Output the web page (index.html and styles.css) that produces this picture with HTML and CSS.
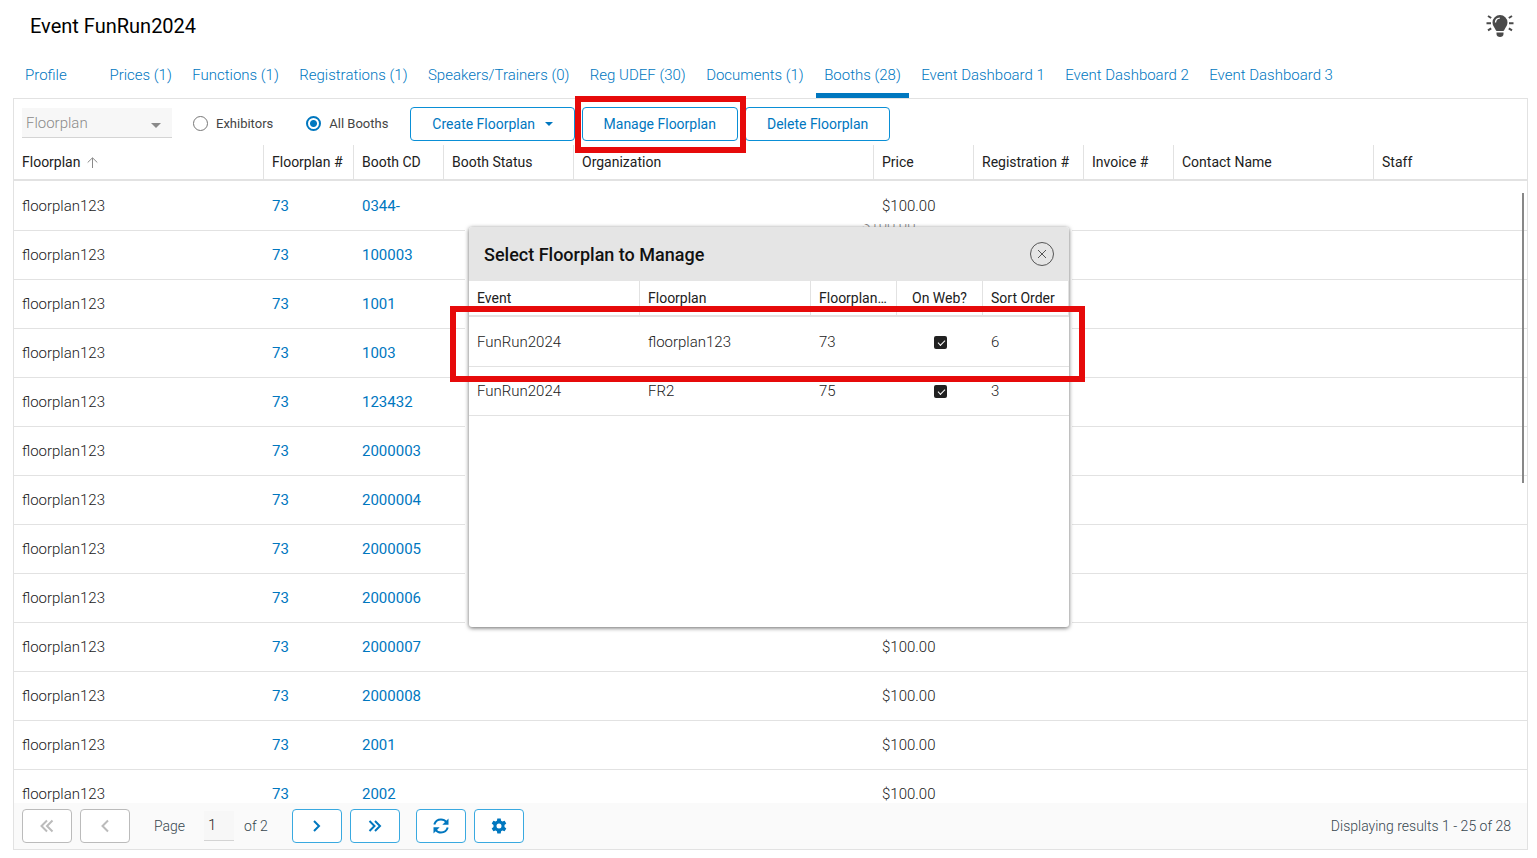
FILE: index.html
```html
<!DOCTYPE html>
<html lang="en">
<head>
  <meta charset="UTF-8" />
  <meta name="viewport" content="width=device-width, initial-scale=1.0"/>
  <title>Event FunRun2024</title>
  <link rel="stylesheet" href="styles.css">
</head>
<body>

  <header>
    <h1>Event FunRun2024</h1>
    <button class="tips" aria-label="Tips">
      <svg width="28" height="24" viewBox="0 0 28 24">
        <path d="M14 1a7.500 7.500 0 0 0-7.500 7.500c0 3.500 2.200 4.800 3.200 7.500.2.700.7 1 1.300 1h6c.6 0 1.100-.3 1.300-1 1-2.700 3.200-4 3.200-7.500A7.500 7.500 0 0 0 14 1z" fill="#4a4a4a"/>
        <path d="M10.500 18.500h7v1.500c0 2-1.500 3-3.500 3s-3.500-1-3.500-3z" fill="#4a4a4a"/>
        <path d="M9.500 8.500a4.500 4.500 0 0 1 4.300-4.300" fill="none" stroke="#fff" stroke-width="1.300"/>
        <path d="M.5 9.200H5M23 9.200h4.500M2 2l3.200 2M26 2l-3.200 2M2 16.400l3.200-2M26 16.400l-3.200-2" stroke="#4a4a4a" stroke-width="2"/>
      </svg>
    </button>
  </header>

  <nav>
    <a href="#profile" class="first">Profile</a>
    <a href="#prices">Prices (1)</a>
    <a href="#functions">Functions (1)</a>
    <a href="#registrations">Registrations (1)</a>
    <a href="#speakers">Speakers/Trainers (0)</a>
    <a href="#udef">Reg UDEF (30)</a>
    <a href="#documents">Documents (1)</a>
    <a href="#booths" class="active">Booths (28)</a>
    <a href="#dashboard1">Event Dashboard 1</a>
    <a href="#dashboard2">Event Dashboard 2</a>
    <a href="#dashboard3">Event Dashboard 3</a>
  </nav>

  <main>
    <div class="toolbar">
      <div class="select-wrap">
        <select aria-label="Floorplan">
          <option>Floorplan</option>
        </select>
      </div>
      <label class="radio exhibitors"><input type="radio" name="show"> Exhibitors</label>
      <label class="radio"><input type="radio" name="show" checked> All Booths</label>
      <div class="actions">
        <button class="btn create">Create Floorplan <span class="caret"></span></button>
        <div class="marked">
          <button class="btn">Manage Floorplan</button>
        </div>
        <button class="btn">Delete Floorplan</button>
      </div>
    </div>

    <div class="grid">
      <table class="booths">
        <colgroup>
          <col class="w250"><col class="w90"><col class="w90"><col class="w130"><col class="w300">
          <col class="w100"><col class="w110"><col class="w90"><col class="w200"><col>
        </colgroup>
        <thead>
          <tr>
            <th>Floorplan
              <svg class="sort" width="11" height="11" viewBox="0 0 11 11"><path d="M5.500 11V1M.7 5.500l4.800-4.700 4.800 4.700" fill="none" stroke="#8a8a8a"/></svg>
            </th>
            <th>Floorplan #</th>
            <th>Booth CD</th>
            <th>Booth Status</th>
            <th>Organization</th>
            <th>Price</th>
            <th>Registration #</th>
            <th>Invoice #</th>
            <th>Contact Name</th>
            <th>Staff</th>
          </tr>
        </thead>
        <tbody id="rows"></tbody>
      </table>
      <div class="scrollbar"></div>
    </div>

    <footer>
      <button class="btn page" disabled aria-label="First page">
        <svg width="14" height="14" viewBox="0 0 14 14"><path d="M7 1.500L1.500 7 7 12.500M12.500 1.500L7 7l5.500 5.500"/></svg>
      </button>
      <button class="btn page" disabled aria-label="Previous page">
        <svg width="14" height="14" viewBox="0 0 14 14"><path d="M10 1.500L4.500 7l5.500 5.500"/></svg>
      </button>
      <label for="page">Page</label>
      <input type="text" id="page" value="1">
      <span class="total">of 2</span>
      <button class="btn page" aria-label="Next page">
        <svg width="14" height="14" viewBox="0 0 14 14"><path d="M4 2l5 5-5 5"/></svg>
      </button>
      <button class="btn page" aria-label="Last page">
        <svg width="14" height="14" viewBox="0 0 14 14"><path d="M1.500 2l5 5-5 5M7 2l5 5-5 5"/></svg>
      </button>
      <button class="btn page refresh" aria-label="Refresh">
        <svg width="16" height="16" viewBox="0 0 16 16"><path d="M1.300 6.500C2.200 3.500 4.800 1.500 8 1.500c2.300 0 4.200 1 5.500 2.700M14.700 9.500c-.9 3-3.500 5-6.700 5-2.300 0-4.200-1-5.500-2.700"/><path class="solid" d="M15.500.5v6.200H9.300zM.5 15.500V9.300h6.200z"/></svg>
      </button>
      <button class="btn page" aria-label="Settings">
        <svg width="16" height="16" viewBox="0 0 16 16"><path class="solid" fill-rule="evenodd" d="M6.300.5h3.400l.4 2.200 1.300.8 2.200-.8 1.700 2.900-1.800 1.500v1.800l1.800 1.500-1.700 2.900-2.200-.8-1.300.8-.4 2.200H6.300l-.4-2.200-1.300-.8-2.200.8-1.700-2.900 1.800-1.500V7.100L.7 5.600l1.700-2.900 2.200.8 1.300-.8zM8 5.500a2.500 2.500 0 1 0 0 5 2.500 2.500 0 0 0 0-5z"/></svg>
      </button>
      <span class="results">Displaying results 1 - 25 of 28</span>
    </footer>
  </main>

  <div class="overlay">
    <span class="ghost" aria-hidden="true">$100.00</span>
    <section class="dialog" role="dialog" aria-labelledby="dialog-title">
      <div class="dialog-head">
        <h2 id="dialog-title">Select Floorplan to Manage</h2>
        <button class="close" aria-label="Close">
          <svg width="24" height="24" viewBox="0 0 24 24"><circle cx="12" cy="12" r="11.500"/><path d="M8 8l8 8M16 8l-8 8"/></svg>
        </button>
      </div>
      <table class="floorplans">
        <colgroup>
          <col class="w171"><col class="w171"><col class="w86"><col class="w86"><col>
        </colgroup>
        <thead>
          <tr><th>Event</th><th>Floorplan</th><th>Floorplan...</th><th class="center">On Web?</th><th>Sort Order</th></tr>
        </thead>
        <tbody>
          <tr><td>FunRun2024</td><td>floorplan123</td><td>73</td><td class="center"><input type="checkbox" aria-label="On web" checked></td><td>6</td></tr>
          <tr><td>FunRun2024</td><td>FR2</td><td>75</td><td class="center"><input type="checkbox" aria-label="On web" checked></td><td>3</td></tr>
        </tbody>
      </table>
      <div class="row-mark"></div>
    </section>
  </div>

  <script>
    const booths = ["0344-", "100003", "1001", "1003", "123432", "2000003", "2000004",
      "2000005", "2000006", "2000007", "2000008", "2001", "2002"];

    document.getElementById("rows").innerHTML = booths.map(cd => `
      <tr>
        <td>floorplan123</td>
        <td><a href="#floorplan">73</a></td>
        <td><a href="#booth">${cd}</a></td>
        <td></td><td></td>
        <td>$100.00</td>
        <td></td><td></td><td></td><td></td>
      </tr>`).join("");
  </script>

</body>
</html>
```
FILE: styles.css
```css
:root {
  --blue: #0077bf;
  --border: #e2e2e2;
  --text: #212121;
  --mark: #e60a0a;
}

* {
  box-sizing: border-box;
  margin: 0;
  padding: 0;
}

body {
  font-family: Roboto, sans-serif;
  font-size: 15px;
  font-weight: 300;
  color: var(--text);
  background: #fff;
  height: 100vh;
  padding: 0 9px 8px 13px;
  display: flex;
  flex-direction: column;
  overflow: hidden;
}

button, input, select {
  font-family: inherit;
}

a {
  color: var(--blue);
  text-decoration: none;
}

header {
  display: flex;
  justify-content: space-between;
  align-items: center;
  height: 51px;
  padding: 0 14px 0 17px;
}

h1 {
  font-size: 20px;
  font-weight: 400;
  color: #000;
}

.tips {
  border: none;
  background: none;
  height: 24px;
}

nav {
  height: 47px;
  padding-left: 4px;
  font-size: 18px;
  white-space: nowrap;
}

nav a {
  display: inline-block;
  height: 47px;
  padding: 0 8px;
  font-size: 15px;
  line-height: 48px;
  vertical-align: top;
}

nav .first {
  width: 80px;
}

nav .active {
  border-bottom: 5px solid var(--blue);
}

main {
  flex: 1;
  min-height: 0;
  display: flex;
  flex-direction: column;
  border: 1px solid var(--border);
}

.toolbar {
  display: flex;
  align-items: center;
  height: 46px;
  padding: 2px 8px 0;
}

.select-wrap {
  position: relative;
  width: 150px;
}

.select-wrap::after {
  content: "";
  position: absolute;
  right: 11px;
  top: 15px;
  border: 5px solid transparent;
  border-top-color: #8a8a8a;
  border-bottom: none;
}

select {
  appearance: none;
  display: block;
  width: 100%;
  height: 30px;
  padding: 0 4px;
  border: none;
  border-bottom: 1px solid #d4d4d4;
  background: #f7f7f7;
  color: #8a8a8a;
  font-size: 15px;
  font-weight: 300;
}

.radio {
  display: flex;
  align-items: center;
  gap: 8px;
  margin-left: 21px;
  font-size: 13px;
  font-weight: 400;
  color: #444;
}

.exhibitors {
  margin-right: 12px;
}

.radio input {
  appearance: none;
  width: 15px;
  height: 15px;
  border: 1px solid #777;
  border-radius: 50%;
}

.radio input:checked {
  border: 2px solid var(--blue);
  background: radial-gradient(circle, var(--blue) 3px, #fff 4px);
}

.actions {
  display: flex;
  gap: 7px;
  margin-left: 22px;
  padding-top: 2px;
}

.btn {
  height: 34px;
  padding: 0 21px;
  border: 1px solid #0a8fd6;
  border-radius: 4px;
  background: #fff;
  color: var(--blue);
  font-size: 14px;
  font-weight: 400;
  white-space: nowrap;
  cursor: pointer;
}

.caret {
  display: inline-block;
  margin-left: 6px;
  vertical-align: 3px;
  border: 4px solid transparent;
  border-top-color: var(--blue);
  border-bottom: none;
}

.marked {
  position: relative;
}

.marked::after {
  content: "";
  position: absolute;
  inset: -11px -8px -12px -7px;
  border: 6px solid var(--mark);
  pointer-events: none;
}

.grid {
  position: relative;
  flex: 1;
  min-height: 0;
  overflow: hidden;
}

table {
  width: 100%;
  table-layout: fixed;
  border-collapse: separate;
  border-spacing: 0;
}

.w250 { width: 250px; }
.w90 { width: 90px; }
.w130 { width: 130px; }
.w300 { width: 300px; }
.w100 { width: 100px; }
.w110 { width: 110px; }
.w200 { width: 200px; }
.w171 { width: 171px; }
.w86 { width: 86px; }

th {
  height: 36px;
  padding: 0 8px;
  border-right: 1px solid var(--border);
  border-bottom: 2px solid var(--border);
  font-size: 14px;
  font-weight: 400;
  text-align: left;
  white-space: nowrap;
  overflow: hidden;
  text-overflow: ellipsis;
}

.booths th:last-child {
  border-right: none;
}

.sort {
  margin-left: 3px;
  vertical-align: -1px;
}

td {
  height: 49px;
  padding: 0 8px;
  border-bottom: 1px solid var(--border);
}

tbody tr:first-child td {
  height: 50px;
  padding-top: 1px;
}

td a {
  font-weight: 400;
}

.center {
  text-align: center;
}

.scrollbar {
  position: absolute;
  right: 3px;
  top: 48px;
  width: 2px;
  height: 290px;
  background: #888;
}

footer {
  display: flex;
  align-items: center;
  height: 46px;
  padding: 0 16px 0 8px;
  background: #fafafa;
  color: #37474f;
  font-size: 14px;
}

.page {
  width: 50px;
  margin-right: 8px;
  padding: 0;
  border-color: #39a9e0;
}

.page svg {
  display: block;
  margin: 0 auto;
  fill: none;
  stroke: var(--blue);
  stroke-width: 2;
}

.page .solid {
  fill: var(--blue);
  stroke: none;
}

.page:disabled {
  border-color: #bbb;
}

.page:disabled svg {
  stroke: #bbb;
}

footer label {
  margin: 0 19px 0 16px;
}

footer input {
  width: 30px;
  height: 30px;
  padding: 0 4px 2px;
  border: none;
  border-bottom: 1px solid #d4d4d4;
  background: #f7f7f7;
  color: var(--text);
  font-size: 15px;
  font-weight: 300;
}

.total {
  margin: 0 24px 0 10px;
}

.refresh {
  margin-left: 8px;
}

.results {
  margin-left: auto;
}

.overlay {
  position: fixed;
  inset: 0 0 3px;
  width: 607px;
  height: 407px;
  margin: auto;
  padding: 3px 3px 4px 4px;
  background: #fff;
}

.ghost {
  position: absolute;
  left: 397px;
  top: 0;
  height: 3px;
  line-height: 3px;
  overflow: hidden;
  color: #888;
}

.dialog {
  position: relative;
  height: 400px;
  background: #fff;
  border-radius: 3px;
  box-shadow: 0 1px 4px rgba(0, 0, 0, 0.6);
}

.dialog-head {
  display: flex;
  justify-content: space-between;
  align-items: center;
  height: 54px;
  padding: 0 15px;
  border-radius: 3px 3px 0 0;
  background: #e5e5e5;
}

h2 {
  font-size: 18px;
  font-weight: 500;
  color: #111;
}

.close {
  height: 24px;
  border: none;
  background: none;
}

.close svg {
  fill: none;
  stroke: #555;
}

.floorplans input {
  appearance: none;
  display: block;
  position: relative;
  width: 13px;
  height: 13px;
  margin: 0 auto;
  border-radius: 2px;
  background: #212121;
}

.floorplans input::after {
  content: "";
  position: absolute;
  left: 4px;
  top: 4px;
  width: 6px;
  height: 3px;
  border: solid #fff;
  border-width: 0 0 1px 1px;
  transform: rotate(-45deg);
}

.row-mark {
  position: absolute;
  top: 79px;
  left: -19px;
  right: -16px;
  height: 76px;
  border: 6px solid var(--mark);
  pointer-events: none;
}
```
